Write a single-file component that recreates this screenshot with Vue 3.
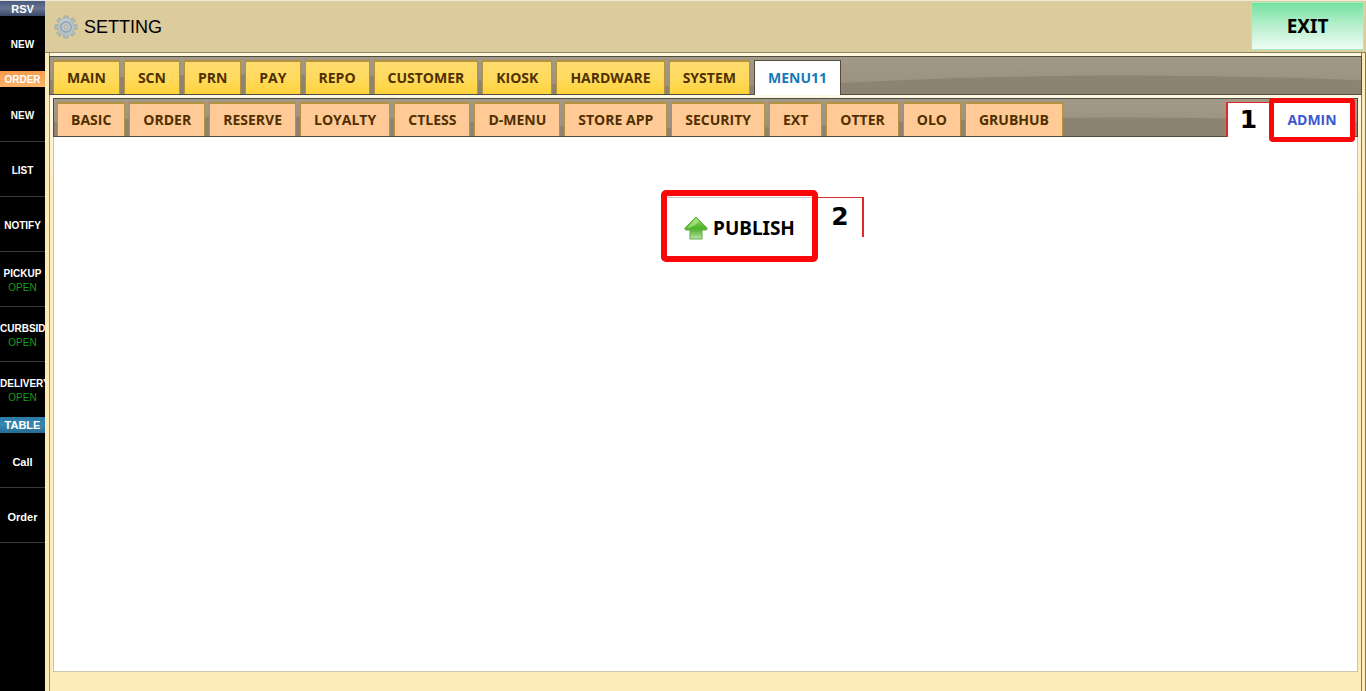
<script setup>
import { ref } from 'vue'

const mainTabs = ['MAIN', 'SCN', 'PRN', 'PAY', 'REPO', 'CUSTOMER', 'KIOSK', 'HARDWARE', 'SYSTEM', 'MENU11']
const subTabs = ['BASIC', 'ORDER', 'RESERVE', 'LOYALTY', 'CTLESS', 'D-MENU', 'STORE APP', 'SECURITY', 'EXT', 'OTTER', 'OLO', 'GRUBHUB']
const activeMain = ref('MENU11')

const groups = [
  { title: 'RSV', tone: 'navy', items: [{ label: 'NEW' }] },
  {
    title: 'ORDER',
    tone: 'orange',
    items: [
      { label: 'NEW' },
      { label: 'LIST' },
      { label: 'NOTIFY' },
      { label: 'PICKUP', status: 'OPEN' },
      { label: 'CURBSID', status: 'OPEN' },
      { label: 'DELIVERY', status: 'OPEN' }
    ]
  },
  { title: 'TABLE', tone: 'blue', items: [{ label: 'Call', large: true }, { label: 'Order', large: true }] }
]
const teeth = [0, 45, 90, 135, 180, 225, 270, 315]
</script>

<template>
  <div class="app">
    <nav class="side">
      <section v-for="g in groups" :key="g.title" class="group">
        <h2 :class="['group-title', g.tone]">{{ g.title }}</h2>
        <button v-for="i in g.items" :key="i.label" type="button" :class="['side-item', { large: i.large }]">
          <span class="name">{{ i.label }}</span>
          <span v-if="i.status" class="status">{{ i.status }}</span>
        </button>
      </section>
    </nav>
    <main class="main">
      <header class="head">
        <svg class="gear" viewBox="0 0 24 24" aria-hidden="true">
          <g fill="#afb9b8" stroke="#93a0a2" stroke-width=".5">
            <rect v-for="t in teeth" :key="t" x="9.6" y="0.8" width="4.8" height="6" rx="1" :transform="`rotate(${t} 12 12)`" />
          </g>
          <circle cx="12" cy="12" r="8.2" fill="#b7c2c4" />
          <circle cx="12" cy="12" r="5" fill="#c2cdd2" stroke="#8ba2b4" stroke-width="1.4" />
          <ellipse cx="12" cy="12" rx="2" ry="2.6" fill="#d5cba6" stroke="#93a8b5" stroke-width=".8" />
          <path d="M6 8.500a7 7 0 0 1 8-3.500" fill="none" stroke="#d6dcd8" stroke-width="1" />
        </svg>
        <h1>SETTING</h1>
        <button type="button" class="exit">EXIT</button>
      </header>
      <div class="body">
        <div class="bar top">
          <svg class="sheen" viewBox="0 0 1310 38" preserveAspectRatio="none" aria-hidden="true">
            <path d="M0 24Q200 12 420 24T850 24Q1070 14 1310 24V38H0Z" fill="#8c8372" />
          </svg>
          <button v-for="t in mainTabs" :key="t" type="button" :class="['tab', { active: t === activeMain }]" @click="activeMain = t">{{ t }}</button>
        </div>
        <div class="panel">
          <div class="bar sub">
            <svg class="sheen" viewBox="0 0 1310 38" preserveAspectRatio="none" aria-hidden="true">
              <path d="M0 24Q200 12 420 24T850 24Q1080 14 1310 24V38H0Z" fill="#8c8372" />
            </svg>
            <button v-for="t in subTabs" :key="t" type="button" class="tab">{{ t }}</button>
            <div class="admin-wrap">
              <span class="mark one">1</span>
              <button type="button" class="admin">ADMIN</button>
            </div>
          </div>
          <div class="content">
            <div class="publish-wrap">
              <button type="button" class="publish">
                <svg class="arrow" viewBox="0 0 24 24" aria-hidden="true">
                  <defs>
                    <linearGradient id="leaf" x1="0" y1="0" x2="0" y2="1">
                      <stop offset="0" stop-color="#9ade66" />
                      <stop offset=".5" stop-color="#4fb52a" />
                      <stop offset=".65" stop-color="#63bb44" />
                      <stop offset="1" stop-color="#c0e6aa" />
                    </linearGradient>
                  </defs>
                  <path d="M12 1L23 12Q23.500 14 22 14H18V23H6V14H2Q.5 14 1 12Z" fill="url(#leaf)" stroke="#62ab48" stroke-width="1" stroke-linejoin="round" />
                  <path d="M12 2.500L3 12Q10 11 15 5.500Z" fill="#c0ee98" opacity=".6" />
                </svg>
                <span>PUBLISH</span>
              </button>
              <span class="mark two">2</span>
            </div>
          </div>
        </div>
      </div>
    </main>
  </div>
</template>

<style>
body {
  background: #fdebba;
}
</style>

<style scoped>
* {
  box-sizing: border-box;
}
button {
  margin: 0;
  padding: 0;
  border: 0;
  background: none;
  cursor: pointer;
}
h1,
h2 {
  margin: 0;
}
.app {
  display: flex;
  min-height: 100vh;
  font-family: "Liberation Sans", Arial, sans-serif;
}
.side {
  flex: 0 0 45px;
  min-width: 0;
  background: #000;
  overflow: hidden;
}
.group-title {
  height: 16px;
  color: #fff;
  font-size: 11px;
  line-height: 17px;
  font-weight: 700;
  text-align: center;
}
.navy {
  border-top: 1px solid #e4e4e4;
  background: linear-gradient(#4a587b, #66738f 50%, #3b4865);
  line-height: 16px;
}
.orange {
  background: linear-gradient(#f69b4c, #fbb469);
  font-size: 10px;
}
.blue {
  background: linear-gradient(#2b7aa5, #3687b2 50%, #236b94);
}
.side-item {
  display: flex;
  flex-direction: column;
  align-items: center;
  justify-content: center;
  width: 100%;
  height: 55px;
  padding-top: 3px;
  border-bottom: 1px solid #393939;
  color: #fff;
  font: 700 10px/14px "Liberation Sans", Arial, sans-serif;
}
.large {
  font-size: 11px;
}
.name {
  max-width: 100%;
}
.side-item:last-child {
  border-bottom-color: #000;
}
.group:last-child .side-item:last-child {
  border-bottom-color: #393939;
}
.status {
  color: #159c1c;
  font-weight: 400;
}
.main {
  flex: 1;
  min-width: 0;
  display: flex;
  flex-direction: column;
}
.head {
  display: flex;
  align-items: center;
  height: 53px;
  padding-left: 9px;
  border-top: 1px solid #f1ead6;
  border-bottom: 1px solid #8f825e;
  background: #dccb9b;
}
.gear {
  width: 24px;
  height: 24px;
}
h1 {
  flex: 1;
  margin-left: 6px;
  color: #000;
  font-size: 18px;
  line-height: 24px;
  font-weight: 400;
}
.exit {
  width: 113px;
  height: 48px;
  margin: 0 2px 2px 0;
  border: 1px solid #a4edc3;
  background: linear-gradient(#74e1a0, #b2eeca 45%, #effcf4);
  color: #000;
  font: 700 19px/24px "Noto Sans", sans-serif;
}
.body {
  flex: 1;
  display: flex;
  flex-direction: column;
  margin: 0 4px;
  padding: 3px 0 0;
  border-right: 1px solid #8d784d;
  border-left: 1px solid #a59359;
  background: linear-gradient(#fff7df, #fff8e2 46px, #fdebba 140px);
  box-shadow: 3px 0 #fdebba, 4px 0 #8d784d;
}
.bar {
  position: relative;
  display: flex;
  align-items: flex-end;
  gap: 4px;
  height: 39px;
  padding-left: 3px;
  border: 1px solid #514c40;
  background: linear-gradient(#a29988, #998f7e);
}
.top {
  margin: 0 -1px;
}
.sheen {
  position: absolute;
  inset: 0;
  width: 100%;
  height: 100%;
}
.tab {
  position: relative;
  height: 34px;
  padding: 0 13px;
  border: 1px solid #b4923f;
  border-top-width: 2px;
  border-bottom: 0;
  background: linear-gradient(#ffdc6e, #ffda5e 50%, #ffd33b);
  color: #503000;
  font: 700 14px/18px "Open Sans", sans-serif;
  white-space: nowrap;
}
.tab.active {
  height: 35px;
  margin-bottom: -1px;
  border: 1px solid #514c40;
  border-bottom: 0;
  background: #fff;
  color: #1878b8;
}
.panel {
  flex: 1;
  display: flex;
  flex-direction: column;
  margin: 3px 3px 0;
  padding-bottom: 19px;
}
.sub .tab {
  background: #ffca96;
}
.content {
  flex: 1;
  border: 1px solid #cbc3aa;
  border-top: 0;
  background: #fff;
}
.admin-wrap {
  position: relative;
  align-self: flex-start;
  display: flex;
  margin: -1px 2px 0 auto;
}
.mark {
  color: #000;
  background: #fff;
  font: 700 25px/34px "DejaVu Sans", Verdana, sans-serif;
  text-align: center;
}
.one {
  width: 43px;
  height: 35px;
  margin-top: 4px;
  border-top: 1px solid #dc2a2a;
  border-left: 2px solid #dc2a2a;
}
.admin {
  width: 86px;
  height: 44px;
  margin-bottom: -5px;
  border: 5px solid #f80808;
  border-radius: 4px;
  background: #fff;
  color: #3d58cf;
  font: 700 14px/18px "Open Sans", sans-serif;
}
.publish-wrap {
  display: flex;
  justify-content: center;
  padding: 53px 0 0 114px;
}
.publish {
  display: flex;
  align-items: center;
  justify-content: center;
  gap: 5px;
  width: 157px;
  height: 72px;
  padding-top: 4px;
  border: 6px solid #f80808;
  border-radius: 5px;
  background: linear-gradient(#fff 1px, #c8c8c8 1px, #c8c8c8 2px, #fff 2px);
  color: #000;
  font: 700 19px/24px "Noto Sans", sans-serif;
}
.arrow {
  width: 24px;
  height: 24px;
}
.two {
  width: 46px;
  height: 40px;
  margin-top: 7px;
  border-top: 1px solid #dc2a2a;
  border-right: 2px solid #dc2a2a;
  line-height: 38px;
}
</style>
